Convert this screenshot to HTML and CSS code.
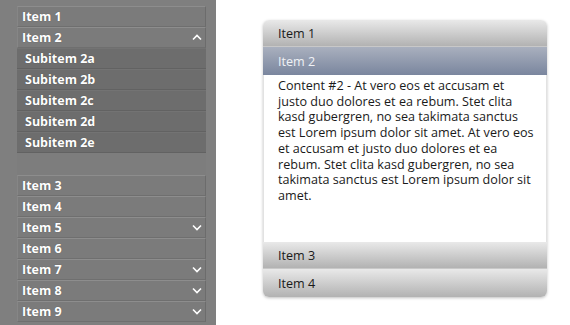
FILE: index.html
```html
<!DOCTYPE html>
<html>
<head>
<meta charset="utf-8">
<link rel="stylesheet" href="styles.css">
</head>
<body>
<div class="page">
  <aside class="side">
    <ul class="menu">
      <li class="row">Item 1</li>
      <li class="row">Item 2<svg class="chev" viewBox="0 0 10 7"><path d="M1 5.5 L5 1.5 L9 5.5" /></svg></li>
      <li class="sub">Subitem 2a</li>
      <li class="sub">Subitem 2b</li>
      <li class="sub">Subitem 2c</li>
      <li class="sub">Subitem 2d</li>
      <li class="sub">Subitem 2e</li>
      <li class="spacer"></li>
      <li class="row">Item 3</li>
      <li class="row">Item 4</li>
      <li class="row">Item 5<svg class="chev" viewBox="0 0 10 7"><path d="M1 1.5 L5 5.5 L9 1.5" /></svg></li>
      <li class="row">Item 6</li>
      <li class="row">Item 7<svg class="chev" viewBox="0 0 10 7"><path d="M1 1.5 L5 5.5 L9 1.5" /></svg></li>
      <li class="row">Item 8<svg class="chev" viewBox="0 0 10 7"><path d="M1 1.5 L5 5.5 L9 1.5" /></svg></li>
      <li class="row">Item 9<svg class="chev" viewBox="0 0 10 7"><path d="M1 1.5 L5 5.5 L9 1.5" /></svg></li>
    </ul>
  </aside>
  <main class="main">
    <div class="acc">
      <div class="head first">Item 1</div>
      <div class="head active">Item 2</div>
      <div class="content">Content #2 - At vero eos et accusam et justo duo dolores et ea rebum. Stet clita kasd gubergren, no sea takimata sanctus est Lorem ipsum dolor sit amet. At vero eos et accusam et justo duo dolores et ea rebum. Stet clita kasd gubergren, no sea takimata sanctus est Lorem ipsum dolor sit amet.</div>
      <div class="head">Item 3</div>
      <div class="head last">Item 4</div>
    </div>
  </main>
</div>
</body>
</html>
```

FILE: styles.css
```css
html, body {
  margin: 0;
  padding: 0;
  background: #ffffff;
}
.page {
  display: flex;
  height: 325px;
  overflow: hidden;
}
.side {
  width: 216px;
  flex: none;
  background: #7f7f7f;
  padding: 6px 10px 0 17px;
  box-sizing: border-box;
}
.menu {
  list-style: none;
  margin: 0;
  padding: 0;
  width: 189px;
  font-family: "Open Sans", "DejaVu Sans", sans-serif;
  font-weight: 700;
  font-size: 12.5px;
  color: #ffffff;
}
.row, .sub {
  height: 21px;
  box-sizing: border-box;
  display: flex;
  align-items: center;
  justify-content: space-between;
  text-shadow: 0 0 1px rgba(0,0,0,0.35);
}
.row {
  background: #7b7b7b;
  border-top: 1px solid #8d8d8d;
  border-bottom: 1px solid #6f6f6f;
  border-left: 1px solid #868686;
  border-right: 1px solid #6c6c6c;
  padding: 0 3px 0 4px;
}
.sub {
  background: #6d6d6d;
  border-bottom: 1px solid #626262;
  border-top: 1px solid #737373;
  padding: 0 3px 0 8px;
}
.spacer {
  height: 22px;
  background: #7d7d7d;
}
.chev {
  width: 10px;
  height: 7px;
  fill: none;
  stroke: #ffffff;
  stroke-width: 1.6;
}
.main {
  flex: 1;
  padding: 20px 0 0 47px;
}
.acc {
  width: 284px;
  font-family: "Open Sans", "Noto Sans", sans-serif;
  font-size: 12.6px;
  color: #1a1a1a;
  border-radius: 6px;
  box-shadow: 0 1px 3px rgba(0,0,0,0.25);
  overflow: hidden;
}
.head {
  height: 27px;
  box-sizing: border-box;
  display: flex;
  align-items: center;
  padding-left: 15px;
  font-size: 12.6px;
  background: linear-gradient(#e9e9e9, #b2b2b2);
  border-bottom: 1px solid #c8c8c8;
}
.head.last {
  border-bottom: none;
  height: 28px;
}
.head.active {
  background: linear-gradient(#a9b0be, #7a869e);
  color: #f0f2f6;
  height: 28px;
  border-bottom: none;
}
.content {
  background: #ffffff;
  height: 167px;
  box-sizing: border-box;
  padding: 3px 12px 0 14px;
  line-height: 15.7px;
  border-left: 1px solid #e2e2e2;
  border-right: 1px solid #e2e2e2;
}
```
